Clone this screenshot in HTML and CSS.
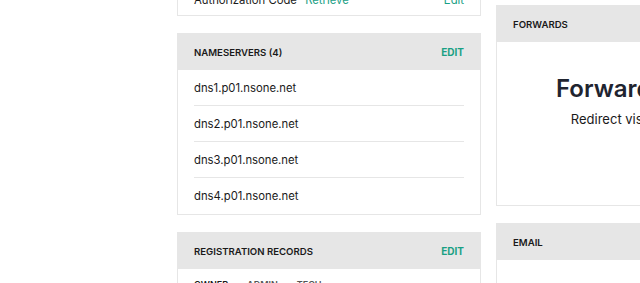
FILE: index.html
```html
<!DOCTYPE html>
<html lang="en">
  <head>
    <meta charset="UTF-8" />
    <meta name="viewport" content="width=device-width, initial-scale=1.0" />
    <title>Domain settings</title>
    <link rel="stylesheet" href="styles.css">
  </head>

  <body>
    <div class="page">
      <div class="col col-left">
        <!-- top card, scrolled mostly out of view -->
        <div class="card">
          <div class="row row-split row-auth">
            <span>Authorization Code <a class="link" href="#">Retrieve</a></span>
            <a class="link" href="#">Edit</a>
          </div>
        </div>

        <div class="card">
          <div class="card-head">
            <span class="card-title">Nameservers (4)</span>
            <a class="head-link" href="#">Edit</a>
          </div>
          <div class="row">dns1.p01.nsone.net</div>
          <div class="row">dns2.p01.nsone.net</div>
          <div class="row">dns3.p01.nsone.net</div>
          <div class="row">dns4.p01.nsone.net</div>
        </div>

        <div class="card">
          <div class="card-head">
            <span class="card-title">Registration Records</span>
            <a class="head-link" href="#">Edit</a>
          </div>
          <div class="tabs">
            <span class="tab tab-active">Owner</span>
            <span class="tab">Admin</span>
            <span class="tab">Tech</span>
          </div>
        </div>
      </div>

      <div class="col col-right">
        <div class="card">
          <div class="card-head">
            <span class="card-title">Forwards</span>
          </div>
          <div class="empty">
            <h2 class="empty-title">Forward your domain</h2>
            <p class="empty-text">Redirect visitors to another website</p>
          </div>
        </div>

        <div class="card">
          <div class="card-head">
            <span class="card-title">Email</span>
          </div>
          <div class="empty"></div>
        </div>
      </div>
    </div>
  </body>
</html>
```

FILE: styles.css
```css
* {
  margin: 0;
  padding: 0;
  box-sizing: border-box;
}
body {
  width: 640px;
  height: 283px;
  overflow: hidden;
  background: #fff;
  font-family: Inter, "Liberation Sans", sans-serif;
  color: #1a1a1a;
}
a {
  text-decoration: none;
}
.page {
  display: flex;
  align-items: flex-start;
  gap: 15px;
  padding-left: 177px;
  width: max-content;
}
.col {
  display: flex;
  flex-direction: column;
  gap: 17px;
}
.col-left {
  width: 304px;
  margin-top: -22px;
}
.col-right {
  width: 366px;
  margin-top: 5px;
}
.card {
  background: #fff;
  border: 1px solid #e6e6e6;
}
.card-head {
  display: flex;
  justify-content: space-between;
  align-items: center;
  height: 36px;
  padding: 0 16px;
  background: #e6e6e6;
}
.card-title {
  font-size: 9.6px;
  font-weight: 600;
  text-transform: uppercase;
  color: #1a1a1a;
}
.head-link {
  font-size: 10px;
  font-weight: 700;
  text-transform: uppercase;
  color: #19a084;
}
.row {
  display: flex;
  align-items: center;
  height: 36px;
  margin: 0 16px;
  font-size: 11.3px;
  border-bottom: 1px solid #e6e6e6;
}
.row:last-child {
  border-bottom: none;
}
.row-split {
  justify-content: space-between;
}
.row-auth {
  padding-top: 6px;
}
.link {
  margin-left: 5px;
  color: #19a084;
}
.tabs {
  display: flex;
  gap: 19px;
  padding: 10px 16px;
  font-size: 9px;
  font-weight: 600;
  text-transform: uppercase;
}
.tab {
  color: #555;
}
.tab-active {
  color: #1a1a1a;
}
.empty {
  height: 163px;
  text-align: center;
  padding-top: 32px;
}
.empty-title {
  font-size: 24px;
  font-weight: 600;
  color: #1f2430;
}
.empty-text {
  margin-top: 8px;
  font-size: 13px;
  color: #1a1a1a;
}
```
